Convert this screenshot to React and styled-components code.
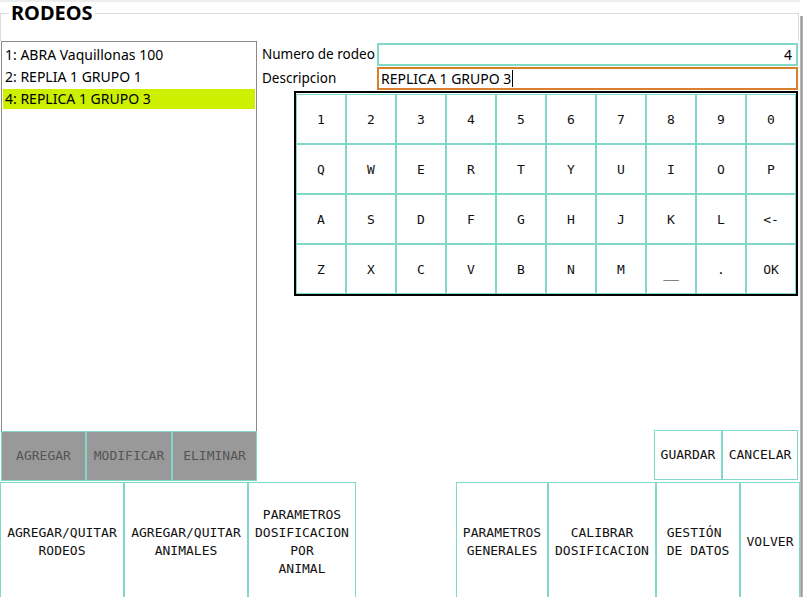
import React from 'react';
import styled, { createGlobalStyle } from 'styled-components';

const GlobalStyle = createGlobalStyle`
    html, body {
        margin: 0;
        padding: 0;
        background: #fff;
        overflow: hidden;
    }
    body {
        font-family: "Noto Sans", "DejaVu Sans", sans-serif;
    }
`;

const TEAL = '#80d8c8';
const MONO = '"DejaVu Sans Mono", "Liberation Mono", monospace';

const Page = styled.div`
    width: 803px;
    height: 597px;
    display: flex;
    overflow: hidden;
    background: #fff;
`;

const Content = styled.div`
    width: 800px;
    display: flex;
    flex-direction: column;
    & > * {
        flex-shrink: 0;
    }
`;

const Edge = styled.div`
    width: 3px;
    margin-top: 16px;
    background: linear-gradient(90deg, #c8c8c8, #9a9a9a, #c8c8c8);
`;

const Header = styled.div`
    height: 39px;
    border-top: 2px solid #eeeeee;
    display: flex;
    align-items: flex-start;
`;

const Rule = styled.div`
    box-sizing: border-box;
    margin-top: 11px;
    height: 28px;
    border-top: 1px solid #dcdcdc;
    flex: ${p => (p.$grow ? 1 : '0 0 9px')};
    border-left: ${p => (p.$grow ? 'none' : '1px solid #dcdcdc')};
    border-right: ${p => (p.$grow ? '1px solid #dcdcdc' : 'none')};
    margin-right: ${p => (p.$grow ? '1px' : '0')};
`;

const Title = styled.h1`
    margin: 0;
    padding: 0 2px;
    font-size: 20px;
    line-height: 22px;
    font-weight: 700;
    color: #000;
`;

const Main = styled.div`
    height: 390px;
    display: flex;
`;

const ListBox = styled.ul`
    list-style: none;
    margin: 0 0 0 1px;
    padding: 3px 1px 0;
    width: 252px;
    border: 1px solid #8a8a8a;
    border-bottom: none;
`;

const ListItem = styled.li`
    height: 20px;
    line-height: 20px;
    margin-bottom: 2px;
    padding-left: 2px;
    font-size: 14px;
    color: #000;
    background: ${p => (p.$selected ? '#ccf000' : 'transparent')};
`;

const RightPane = styled.div`
    margin-left: 5px;
    width: 536px;
    display: flex;
    flex-direction: column;
`;

const FormRow = styled.div`
    display: flex;
    align-items: center;
    height: 24px;
    margin-top: ${p => p.$top || 0}px;
`;

const Label = styled.span`
    width: 115px;
    font-size: 13.5px;
    color: #000;
    white-space: nowrap;
`;

const Field = styled.div`
    box-sizing: border-box;
    width: 421px;
    height: 23px;
    line-height: 19px;
    border: 2px solid ${p => p.$border};
    font-size: 14px;
    color: #000;
    padding: ${p => (p.$right ? '0 4px 0 0' : '0 0 0 2px')};
    text-align: ${p => (p.$right ? 'right' : 'left')};
`;

const Caret = styled.span`
    display: inline-block;
    width: 1px;
    height: 17px;
    background: #000;
    vertical-align: -3px;
    margin-left: 1px;
`;

const Keyboard = styled.div`
    margin: 1px 0 0 32px;
    width: 500px;
    border: 2px solid #000;
    display: grid;
    grid-template-columns: repeat(10, 50px);
    grid-auto-rows: 50px;
    padding-top: 1px;
`;

const Key = styled.button`
    box-sizing: border-box;
    border: 1px solid ${TEAL};
    background: #fff;
    font-family: ${MONO};
    font-size: 13px;
    color: #111;
    padding: 0;
    display: flex;
    align-items: ${p => (p.$low ? 'flex-end' : 'center')};
    justify-content: center;
    padding-bottom: ${p => (p.$low ? '12px' : '0')};
`;

const ActionRow = styled.div`
    height: 51px;
    display: flex;
    justify-content: space-between;
`;

const Group = styled.div`
    display: flex;
    margin: ${p => p.$margin || 0};
`;

const Button = styled.button`
    box-sizing: border-box;
    width: ${p => p.$w}px;
    height: ${p => p.$h || 50}px;
    border: 1px solid ${TEAL};
    background: ${p => (p.$disabled ? '#999999' : '#fff')};
    color: ${p => (p.$disabled ? '#555' : '#111')};
    font-family: ${MONO};
    font-size: 13px;
    line-height: 18px;
    padding: 0;
    white-space: pre-line;
    text-align: center;
`;

const BottomRow = styled.div`
    height: 120px;
    display: flex;
    justify-content: space-between;
`;

const keys = [
    ['1', '2', '3', '4', '5', '6', '7', '8', '9', '0'],
    ['Q', 'W', 'E', 'R', 'T', 'Y', 'U', 'I', 'O', 'P'],
    ['A', 'S', 'D', 'F', 'G', 'H', 'J', 'K', 'L', '<-'],
    ['Z', 'X', 'C', 'V', 'B', 'N', 'M', '__', '.', 'OK'],
];

const rodeos = [
    { id: 1, text: '1: ABRA Vaquillonas 100' },
    { id: 2, text: '2: REPLIA 1 GRUPO 1' },
    { id: 4, text: '4: REPLICA 1 GRUPO 3', selected: true },
];

export default function App() {
    return <>
        <GlobalStyle />
        <Page>
            <Content>
                <Header>
                    <Rule />
                    <Title>RODEOS</Title>
                    <Rule $grow />
                </Header>
                <Main>
                    <ListBox>
                        {rodeos.map(r => (
                            <ListItem key={r.id} $selected={r.selected}>{r.text}</ListItem>
                        ))}
                    </ListBox>
                    <RightPane>
                        <FormRow $top={1}>
                            <Label>Numero de rodeo</Label>
                            <Field $border={TEAL} $right>4</Field>
                        </FormRow>
                        <FormRow>
                            <Label>Descripcion</Label>
                            <Field $border="#d9802a">REPLICA 1 GRUPO 3<Caret /></Field>
                        </FormRow>
                        <Keyboard>
                            {keys.flat().map((k, i) => (
                                <Key key={i} $low={k === '__'}>{k}</Key>
                            ))}
                        </Keyboard>
                    </RightPane>
                </Main>
                <ActionRow>
                    <Group $margin="0 0 0 1px">
                        <Button $w={85} $disabled>AGREGAR</Button>
                        <Button $w={86} $disabled>MODIFICAR</Button>
                        <Button $w={85} $disabled>ELIMINAR</Button>
                    </Group>
                    <Group $margin="-1px 2px 0 0">
                        <Button $w={68}>GUARDAR</Button>
                        <Button $w={76}>CANCELAR</Button>
                    </Group>
                </ActionRow>
                <BottomRow>
                    <Group>
                        <Button $w={124} $h={120}>{'AGREGAR/QUITAR\nRODEOS'}</Button>
                        <Button $w={124} $h={120}>{'AGREGAR/QUITAR\nANIMALES'}</Button>
                        <Button $w={108} $h={120}>{'PARAMETROS\nDOSIFICACION\nPOR\nANIMAL'}</Button>
                    </Group>
                    <Group>
                        <Button $w={92} $h={120}>{'PARAMETROS\nGENERALES'}</Button>
                        <Button $w={108} $h={120}>{'CALIBRAR\nDOSIFICACION'}</Button>
                        <Button $w={84} $h={120}>{'GESTIÓN\u00a0\nDE DATOS'}</Button>
                        <Button $w={60} $h={120}>VOLVER</Button>
                    </Group>
                </BottomRow>
            </Content>
            <Edge />
        </Page>
    </>;
}
